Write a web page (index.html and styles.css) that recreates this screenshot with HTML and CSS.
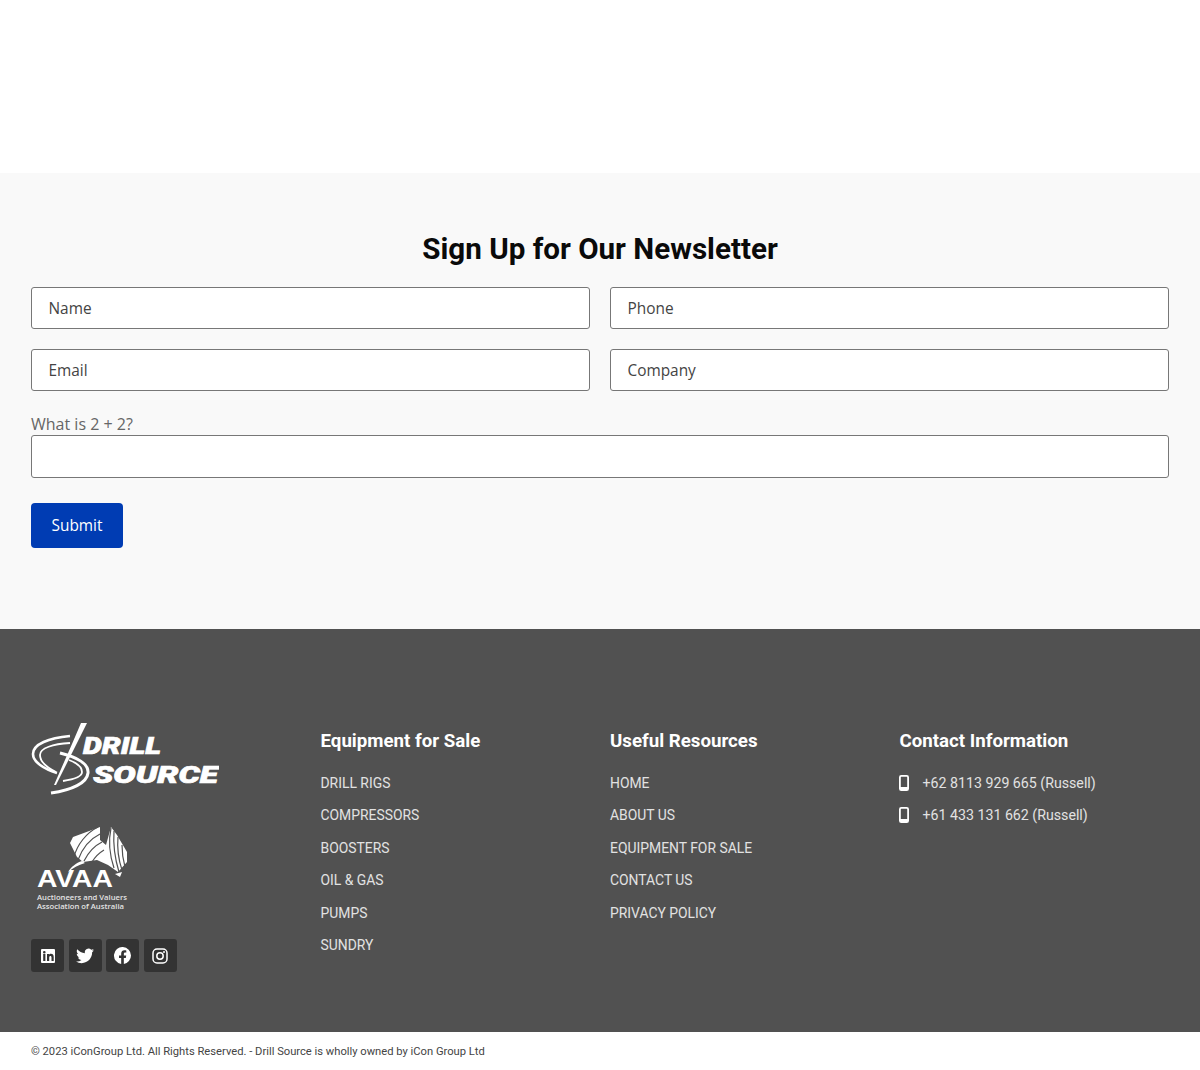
FILE: index.html
```html
<!DOCTYPE html>
<html lang="en">
<head>
  <meta charset="UTF-8">
  <title>Drill Source</title>
  <link rel="stylesheet" href="styles.css">
</head>
<body>

  <div class="top-space"></div>

  <section class="newsletter">
    <h2>Sign Up for Our Newsletter</h2>
    <form class="signup">
      <div class="field-row">
        <input type="text" placeholder="Name">
        <input type="text" placeholder="Phone">
      </div>
      <div class="field-row">
        <input type="text" placeholder="Email">
        <input type="text" placeholder="Company">
      </div>
      <label class="captcha" for="captcha">What is 2 + 2?</label>
      <input type="text" id="captcha">
      <button type="button">Submit</button>
    </form>
  </section>

  <footer class="site-footer">
    <div class="col brand">
      <svg class="logo" width="188" height="74" viewBox="0 0 188 74">
        <g fill="none" stroke="#fff">
          <path d="M39 14C18 16 2 22 2 32c0 8 11 15 24 19" stroke-width="2.600"/>
          <path d="M39 21C22 22 9 26 9 33c0 7 8 13 16 17" stroke-width="1.800"/>
          <path d="M29 31c17 4 29 11 28 20-1 10-16 17-37 20" stroke-width="3"/>
          <path d="M38 38c8 3 13 7 13 12 0 4-6 7-19 9" stroke-width="1.800"/>
        </g>
        <path d="M50 1h6L25 63h-2l18-41z" fill="#fff"/>
        <text class="logo-word" x="52" y="32" textLength="78" lengthAdjust="spacingAndGlyphs">DRILL</text>
        <text class="logo-word" x="62" y="60.500" textLength="125" lengthAdjust="spacingAndGlyphs">SOURCE</text>
      </svg>

      <svg class="avaa" width="98" height="86" viewBox="0 0 98 86">
        <path d="M34 18l3-6 27-10v13l6 5 5-18 6 8 10 17v10l-9 10-10-7-11-5-14 2-6-5z" fill="#fff"/>
        <path d="M46 36c-6 2-11 6-14 11 5-4 10-7 17-9z" fill="#fff"/>
        <path d="M79 49l7-2-2 5z" fill="#fff"/>
        <g fill="none" stroke="#515151" stroke-width="1.200">
          <path d="M62 2C50 8 41 20 38 32"/>
          <path d="M64 9C54 14 46 24 42 35"/>
          <path d="M66 17c-8 4-14 11-18 19"/>
          <path d="M68 25c-5 3-9 7-12 12"/>
          <path d="M75 3c-3 14-1 28 3 40"/>
          <path d="M78 6c-1 14 1 28 5 41"/>
          <path d="M82 12c-1 11 1 24 4 33"/>
          <path d="M86 20c0 7 1 15 3 22"/>
        </g>
        <text class="avaa-word" x="1" y="61.500" textLength="76" lengthAdjust="spacingAndGlyphs">AVAA</text>
        <text class="avaa-small" x="1" y="74.500" textLength="90" lengthAdjust="spacingAndGlyphs">Auctioneers and Valuers</text>
        <text class="avaa-small" x="1" y="83.500" textLength="87" lengthAdjust="spacingAndGlyphs">Association of Australia</text>
      </svg>

      <div class="socials">
        <a class="social" href="#">
          <svg width="16" height="16" viewBox="0 0 16 16"><path fill-rule="evenodd" d="M2 1h12a1 1 0 0 1 1 1v12a1 1 0 0 1-1 1H2a1 1 0 0 1-1-1V2a1 1 0 0 1 1-1zm1.200 5v7h2.200V6zm1.100-3a1.300 1.300 0 1 0 0 2.600 1.300 1.300 0 0 0 0-2.600zM7 6v7h2.200V9.500c0-1 .4-1.600 1.200-1.600s1.100.6 1.100 1.600V13h2.200V9c0-2-1-3.200-2.700-3.200-1 0-1.500.5-1.800 1V6z" fill="#fff"/></svg>
        </a>
        <a class="social" href="#">
          <svg width="18" height="16" viewBox="0 0 24 20"><path d="M24 2.400c-.9.400-1.800.7-2.800.8 1-.6 1.800-1.600 2.200-2.700-1 .6-2 1-3.100 1.200A4.900 4.900 0 0 0 11.900 6.200C7.800 6 4.200 4 1.700.9c-1.300 2.200-.7 5.100 1.500 6.600-.8 0-1.600-.2-2.200-.6 0 2.300 1.600 4.400 3.900 4.900-.7.200-1.500.2-2.200.1.600 2 2.400 3.400 4.600 3.400A9.900 9.900 0 0 1 0 17.300 14 14 0 0 0 7.500 19.500c9.100 0 14.300-7.700 14-14.600 1-.7 1.900-1.600 2.500-2.500z" fill="#fff"/></svg>
        </a>
        <a class="social" href="#">
          <svg width="17" height="17" viewBox="0 0 16 16"><path d="M16 8a8 8 0 1 0-9.250 7.900v-5.600H4.700V8h2.050V6.240c0-2 1.200-3.120 3.030-3.120.88 0 1.800.16 1.800.16v1.970h-1c-1 0-1.300.62-1.300 1.250V8h2.200l-.35 2.300H9.250v5.600A8 8 0 0 0 16 8z" fill="#fff"/></svg>
        </a>
        <a class="social" href="#">
          <svg width="16" height="16" viewBox="0 0 16 16"><g fill="none" stroke="#fff" stroke-width="1.500"><rect x="1" y="1" width="14" height="14" rx="4"/><circle cx="8" cy="8" r="3.200"/></g><circle cx="12" cy="4" r="1" fill="#fff"/></svg>
        </a>
      </div>
    </div>

    <div class="col">
      <h3>Equipment for Sale</h3>
      <ul class="links">
        <li><a href="#">DRILL RIGS</a></li>
        <li><a href="#">COMPRESSORS</a></li>
        <li><a href="#">BOOSTERS</a></li>
        <li><a href="#">OIL &amp; GAS</a></li>
        <li><a href="#">PUMPS</a></li>
        <li><a href="#">SUNDRY</a></li>
      </ul>
    </div>

    <div class="col">
      <h3>Useful Resources</h3>
      <ul class="links">
        <li><a href="#">HOME</a></li>
        <li><a href="#">ABOUT US</a></li>
        <li><a href="#">EQUIPMENT FOR SALE</a></li>
        <li><a href="#">CONTACT US</a></li>
        <li><a href="#">PRIVACY POLICY</a></li>
      </ul>
    </div>

    <div class="col">
      <h3>Contact Information</h3>
      <ul class="links">
        <li class="phone">
          <svg width="10" height="16" viewBox="0 0 10 16"><rect x=".9" y=".9" width="8.200" height="14.200" rx="1.400" fill="none" stroke="#fff" stroke-width="1.800"/><rect x="1" y="12" width="8" height="3" fill="#fff"/></svg>
          <a href="#">+62 8113 929 665 (Russell)</a>
        </li>
        <li class="phone">
          <svg width="10" height="16" viewBox="0 0 10 16"><rect x=".9" y=".9" width="8.200" height="14.200" rx="1.400" fill="none" stroke="#fff" stroke-width="1.800"/><rect x="1" y="12" width="8" height="3" fill="#fff"/></svg>
          <a href="#">+61 433 131 662 (Russell)</a>
        </li>
      </ul>
    </div>
  </footer>

  <div class="copyright">© 2023 iConGroup Ltd. All Rights Reserved. - Drill Source is wholly owned by iCon Group Ltd</div>

</body>
</html>
```

FILE: styles.css
```css
* {
  box-sizing: border-box;
}

body {
  margin: 0;
  background-color: #fff;
  font-family: 'Roboto', sans-serif;
  color: #333;
}

.top-space {
  height: 173px;
}

.newsletter {
  height: 456px;
  padding: 58px 31px 0;
  background-color: #f9f9f9;
}

.newsletter h2 {
  margin: 0 0 19px;
  font-family: 'Roboto', sans-serif;
  font-size: 29.600px;
  line-height: 37px;
  font-weight: 700;
  text-align: center;
  color: #0a0a0a;
}

.field-row {
  display: grid;
  grid-template-columns: 1fr 1fr;
  gap: 20px;
  margin-bottom: 20px;
}

.signup input {
  display: block;
  width: 100%;
  height: 42px;
  padding: 0 16.500px;
  background-color: #fff;
  border: 1px solid #777;
  border-radius: 3px;
  font-family: 'Open Sans', sans-serif;
  font-size: 15.400px;
  color: #333;
}

.signup input::placeholder {
  color: #444;
  opacity: 1;
}

.captcha {
  display: block;
  height: 24px;
  padding-top: 2px;
  font-family: 'Open Sans', sans-serif;
  font-size: 16px;
  line-height: 22px;
  color: #666;
}

.signup #captcha {
  height: 43px;
}

.signup button {
  display: block;
  width: 92px;
  height: 45px;
  margin-top: 25px;
  background-color: #003cb3;
  border: none;
  border-radius: 4px;
  font-family: 'Open Sans', sans-serif;
  font-size: 15.400px;
  color: #fff;
}

.site-footer {
  display: grid;
  grid-template-columns: repeat(4, 289.5px);
  height: 403px;
  padding: 93px 0 0 31px;
  background-color: #515151;
  color: #fff;
}

.logo,
.avaa {
  display: block;
}

.avaa {
  margin: 29px 0 0 5px;
}

.logo-word {
  font-family: 'Roboto', sans-serif;
  font-size: 24px;
  font-weight: 900;
  font-style: italic;
  fill: #fff;
  stroke: #fff;
  stroke-width: 0.7;
}

.avaa-word {
  font-family: 'Liberation Sans', sans-serif;
  font-size: 24px;
  font-weight: 700;
  fill: #fff;
}

.avaa-small {
  font-family: 'Open Sans', sans-serif;
  font-size: 7px;
  font-weight: 600;
  fill: #e4e4e4;
}

.socials {
  display: flex;
  gap: 4.600px;
  margin-top: 28px;
}

.social {
  display: flex;
  align-items: center;
  justify-content: center;
  width: 33px;
  height: 33px;
  background-color: #333;
  border-radius: 3px;
}

.col h3 {
  margin: 7px 0 13.500px;
  font-size: 18.700px;
  line-height: 24px;
  font-weight: 700;
  color: #fff;
}

.links {
  margin: 0;
  padding: 0;
  list-style: none;
}

.links li {
  height: 32.500px;
  font-size: 13.900px;
  line-height: 32px;
}

.links a {
  color: #e2e2e2;
  text-decoration: none;
}

.links .phone {
  display: flex;
  align-items: center;
  gap: 14px;
  margin-left: -1px;
  font-size: 14.200px;
}

.copyright {
  padding-left: 31px;
  font-size: 11.200px;
  line-height: 40px;
  color: #444;
}
```
